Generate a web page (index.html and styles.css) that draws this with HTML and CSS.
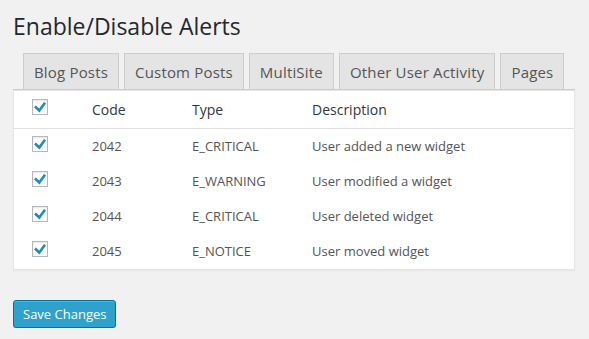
FILE: index.html
```html
<!DOCTYPE html>
<html lang="en">

<head>
    <meta charset="UTF-8">
    <meta name="viewport" content="width=device-width, initial-scale=1.0">
    <title>Enable/Disable Alerts</title>
    <link rel="stylesheet" href="styles.css">
</head>

<body>
    <div class="wrap">
        <h2 class="page-title">Enable/Disable Alerts</h2>

        <div class="nav-tab-wrapper">
            <a href="#" class="nav-tab">Blog Posts</a>
            <a href="#" class="nav-tab">Custom Posts</a>
            <a href="#" class="nav-tab">MultiSite</a>
            <a href="#" class="nav-tab">Other User Activity</a>
            <a href="#" class="nav-tab">Pages</a>
        </div>

        <div class="alerts">
            <div class="alert-row alert-head">
                <span class="check"><svg viewBox="0 0 14 14"><path d="M2 6.5 L6.3 10.5 L12 2.8"/></svg></span>
                <span class="cell">Code</span>
                <span class="cell">Type</span>
                <span class="cell">Description</span>
            </div>
            <div class="alert-row">
                <span class="check"><svg viewBox="0 0 14 14"><path d="M2 6.5 L6.3 10.5 L12 2.8"/></svg></span>
                <span class="cell">2042</span>
                <span class="cell">E_CRITICAL</span>
                <span class="cell">User added a new widget</span>
            </div>
            <div class="alert-row">
                <span class="check"><svg viewBox="0 0 14 14"><path d="M2 6.5 L6.3 10.5 L12 2.8"/></svg></span>
                <span class="cell">2043</span>
                <span class="cell">E_WARNING</span>
                <span class="cell">User modified a widget</span>
            </div>
            <div class="alert-row">
                <span class="check"><svg viewBox="0 0 14 14"><path d="M2 6.5 L6.3 10.5 L12 2.8"/></svg></span>
                <span class="cell">2044</span>
                <span class="cell">E_CRITICAL</span>
                <span class="cell">User deleted widget</span>
            </div>
            <div class="alert-row">
                <span class="check"><svg viewBox="0 0 14 14"><path d="M2 6.5 L6.3 10.5 L12 2.8"/></svg></span>
                <span class="cell">2045</span>
                <span class="cell">E_NOTICE</span>
                <span class="cell">User moved widget</span>
            </div>
        </div>

        <button type="button" class="button-primary">Save Changes</button>
    </div>
</body>

</html>
```

FILE: styles.css
```css
body {
    font-family: "Open Sans", sans-serif;
    font-size: 13px;
    color: #444;
    margin: 0;
    padding: 0;
    background-color: #f1f1f1;
}

.wrap {
    padding: 12px 0 0 13px;
}

.page-title {
    font-size: 23px;
    font-weight: 400;
    line-height: 29px;
    color: #23282d;
    margin: 0 0 12px 0;
}

.nav-tab-wrapper {
    display: flex;
    gap: 5px;
    width: 562px;
    padding-left: 10px;
    box-sizing: border-box;
    border-bottom: 1px solid #ccc;
}

.nav-tab {
    display: block;
    padding: 6px 10px 5px;
    font-size: 15px;
    line-height: 24px;
    letter-spacing: 0.18px;
    color: #555;
    text-decoration: none;
    background-color: #e4e4e4;
    border: 1px solid #ccc;
    border-bottom: none;
}

.alerts {
    width: 562px;
    box-sizing: border-box;
    background-color: #fff;
    border: 1px solid #e5e5e5;
    box-shadow: 0 1px 1px rgba(0, 0, 0, 0.04);
}

.alert-row {
    display: grid;
    grid-template-columns: 68px 100px 120px 1fr;
    align-items: center;
    height: 35px;
}

.alert-head {
    height: 37px;
    border-bottom: 1px solid #e1e1e1;
    font-size: 14px;
    color: #32373c;
}

.cell {
    padding-left: 10px;
    line-height: 19px;
    color: #555;
}

.alert-head .cell {
    line-height: 20px;
    color: #32373c;
}

.check {
    align-self: start;
    margin: 7px 0 0 18px;
    width: 16px;
    height: 16px;
    box-sizing: border-box;
    border: 1px solid #b4b9be;
    background-color: #fff;
    box-shadow: inset 0 1px 2px rgba(0, 0, 0, 0.1);
}

.alert-head .check {
    margin-top: 8px;
}

.check svg {
    display: block;
    width: 14px;
    height: 14px;
}

.check path {
    fill: none;
    stroke: #1e8cbe;
    stroke-width: 2.6;
}

.button-primary {
    display: block;
    margin-top: 30px;
    height: 28px;
    padding: 1px 9px 0;
    font-family: "Open Sans", sans-serif;
    font-size: 13px;
    line-height: 25px;
    color: #fff;
    background-color: #2ea2cc;
    border: 1px solid #0074a2;
    border-radius: 3px;
    box-shadow: inset 0 1px 0 rgba(120, 200, 230, 0.5), 0 1px 0 rgba(0, 0, 0, 0.15);
    cursor: pointer;
}
```
